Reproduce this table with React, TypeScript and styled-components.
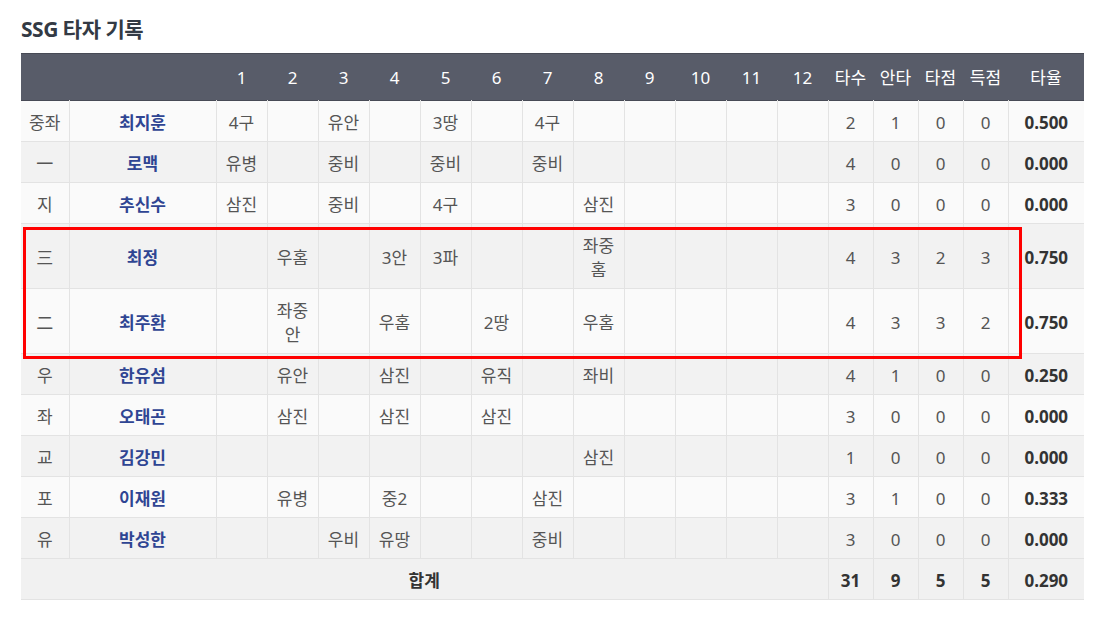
import React from "react";
import styled, { createGlobalStyle } from "styled-components";

const GlobalStyle = createGlobalStyle`
  * { box-sizing: border-box; }
  html, body { margin: 0; padding: 0; background: #ffffff; }
  body {
    font-family: "Noto Sans", "Noto Sans CJK KR", sans-serif;
    color: #555;
  }
`;

const Page = styled.div`
  padding: 16px 34px 20px 21px;
`;

const Title = styled.h2`
  margin: 0 0 10px 0;
  font-size: 21px;
  line-height: 27px;
  font-weight: 700;
  color: #333a44;
  letter-spacing: -0.5px;
`;

const TableWrap = styled.div`
  position: relative;
  width: 1063px;
`;

const Table = styled.table`
  width: 1063px;
  table-layout: fixed;
  border-collapse: collapse;
  border-spacing: 0;
  font-size: 17px;
`;

const HeadRow = styled.tr`
  background: #585c69;
  border-top: 1px solid #474a55;
  border-bottom: 1px solid #474a55;
`;

const Th = styled.th`
  height: 47px;
  padding: 2px 2px 0;
  font-weight: 400;
  color: #ffffff;
  text-align: center;
  line-height: 24px;
`;

const Row = styled.tr<{ $alt: boolean }>`
  background: ${(p) => (p.$alt ? "#f2f2f2" : "#fafafa")};
  border-bottom: 1px solid #e3e3e3;
`;

const Td = styled.td<{ $last?: boolean }>`
  padding: 10px 5px 6px;
  line-height: 24px;
  text-align: center;
  vertical-align: middle;
  color: #555;
  border-right: ${(p) => (p.$last ? "none" : "1px solid #e3e3e3")};
  word-break: break-all;
`;

const NameTd = styled(Td)`
  font-weight: 700;
  color: #2f4593;
`;

const AvgTd = styled(Td)`
  font-weight: 700;
  color: #333;
`;

const FootRow = styled.tr`
  background: #f1f1f1;
  border-bottom: 1px solid #e3e3e3;
`;

const FootTd = styled(Td)`
  font-weight: 700;
  color: #333;
`;

const Highlight = styled.div`
  position: absolute;
  left: 2px;
  top: 174px;
  width: 999px;
  height: 132px;
  border: 3px solid #ff0000;
  pointer-events: none;
`;

type Batter = {
  pos: string;
  name: string;
  inn: string[];
  ab: number;
  h: number;
  rbi: number;
  r: number;
  avg: string;
};

const pad = (a: string[]) => [...a, ...Array(12 - a.length).fill("")];

const batters: Batter[] = [
  { pos: "중좌", name: "최지훈", inn: pad(["4구", "", "유안", "", "3땅", "", "4구"]), ab: 2, h: 1, rbi: 0, r: 0, avg: "0.500" },
  { pos: "一", name: "로맥", inn: pad(["유병", "", "중비", "", "중비", "", "중비"]), ab: 4, h: 0, rbi: 0, r: 0, avg: "0.000" },
  { pos: "지", name: "추신수", inn: pad(["삼진", "", "중비", "", "4구", "", "", "삼진"]), ab: 3, h: 0, rbi: 0, r: 0, avg: "0.000" },
  { pos: "三", name: "최정", inn: pad(["", "우홈", "", "3안", "3파", "", "", "좌중홈"]), ab: 4, h: 3, rbi: 2, r: 3, avg: "0.750" },
  { pos: "二", name: "최주환", inn: pad(["", "좌중안", "", "우홈", "", "2땅", "", "우홈"]), ab: 4, h: 3, rbi: 3, r: 2, avg: "0.750" },
  { pos: "우", name: "한유섬", inn: pad(["", "유안", "", "삼진", "", "유직", "", "좌비"]), ab: 4, h: 1, rbi: 0, r: 0, avg: "0.250" },
  { pos: "좌", name: "오태곤", inn: pad(["", "삼진", "", "삼진", "", "삼진"]), ab: 3, h: 0, rbi: 0, r: 0, avg: "0.000" },
  { pos: "교", name: "김강민", inn: pad(["", "", "", "", "", "", "", "삼진"]), ab: 1, h: 0, rbi: 0, r: 0, avg: "0.000" },
  { pos: "포", name: "이재원", inn: pad(["", "유병", "", "중2", "", "", "삼진"]), ab: 3, h: 1, rbi: 0, r: 0, avg: "0.333" },
  { pos: "유", name: "박성한", inn: pad(["", "", "우비", "유땅", "", "", "중비"]), ab: 3, h: 0, rbi: 0, r: 0, avg: "0.000" },
];

const innings = Array.from({ length: 12 }, (_, i) => i + 1);

export default function App() {
  return (
    <>
      <GlobalStyle />
      <Page>
        <Title>SSG 타자 기록</Title>
        <TableWrap>
          <Table>
            <colgroup>
              <col style={{ width: 48 }} />
              <col style={{ width: 147 }} />
              {innings.map((i) => (
                <col key={i} style={{ width: 51 }} />
              ))}
              <col style={{ width: 45 }} />
              <col style={{ width: 45 }} />
              <col style={{ width: 45 }} />
              <col style={{ width: 45 }} />
              <col style={{ width: 76 }} />
            </colgroup>
            <thead>
              <HeadRow>
                <Th />
                <Th />
                {innings.map((i) => (
                  <Th key={i}>{i}</Th>
                ))}
                <Th>타수</Th>
                <Th>안타</Th>
                <Th>타점</Th>
                <Th>득점</Th>
                <Th>타율</Th>
              </HeadRow>
            </thead>
            <tbody>
              {batters.map((b, idx) => (
                <Row key={b.name} $alt={idx % 2 === 1}>
                  <Td>{b.pos}</Td>
                  <NameTd>{b.name}</NameTd>
                  {b.inn.map((v, i) => (
                    <Td key={i}>{v}</Td>
                  ))}
                  <Td>{b.ab}</Td>
                  <Td>{b.h}</Td>
                  <Td>{b.rbi}</Td>
                  <Td>{b.r}</Td>
                  <AvgTd $last>{b.avg}</AvgTd>
                </Row>
              ))}
              <FootRow>
                <FootTd colSpan={14}>합계</FootTd>
                <FootTd>31</FootTd>
                <FootTd>9</FootTd>
                <FootTd>5</FootTd>
                <FootTd>5</FootTd>
                <FootTd $last>0.290</FootTd>
              </FootRow>
            </tbody>
          </Table>
          <Highlight />
        </TableWrap>
      </Page>
    </>
  );
}
